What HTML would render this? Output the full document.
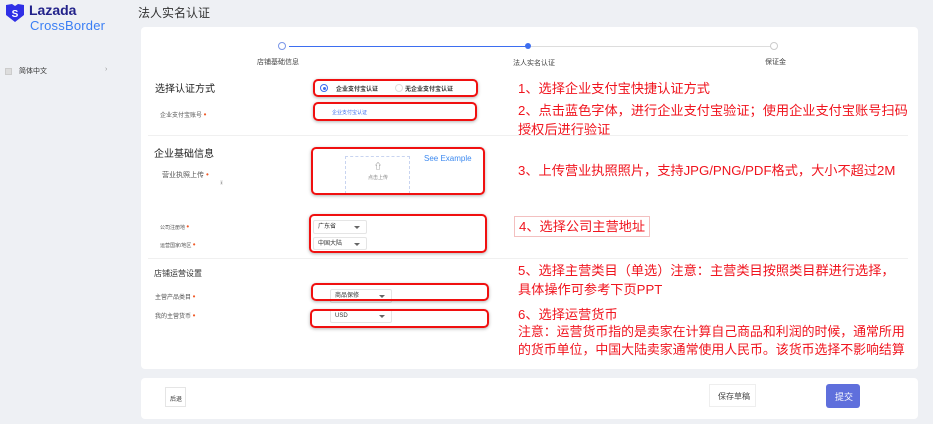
<!DOCTYPE html><html><head><meta charset="utf-8"><style>
*{margin:0;padding:0;box-sizing:border-box}
body{width:933px;height:424px;background:#eef0f4;font-family:"Liberation Sans","Noto Sans CJK SC",sans-serif;position:relative;overflow:hidden;color:#333}
.a{position:absolute;white-space:nowrap}
.card{position:absolute;background:#fff;border-radius:4px}
.r{position:absolute;border:2.5px solid #f01010;border-radius:5px;box-shadow:0 1px 3px rgba(0,0,0,.3)}
.red{position:absolute;color:#f0141e;font-size:13.2px;white-space:nowrap;line-height:19px}
.lbl{font-size:6px;color:#555}
.st{color:#f05a28;font-size:8px}
.sel{position:absolute;border:1px solid #e5e5e5;background:#fff;font-size:6px;line-height:12px;padding:0 4px;border-radius:2px}
.sel:after{content:"";position:absolute;right:6px;top:5px;border:3px solid transparent;border-top:3px solid #666}
.h{font-size:10px;color:#222}
</style></head><body>
<svg class="a" style="left:4px;top:3px" width="22" height="20" viewBox="0 0 22 20"><path d="M2 2 L8 1 L11 3 L14 1 L20 2 L20 12 L11 19 L2 12Z" fill="#2f2fe6"/><text x="11" y="14" font-size="10" fill="#fff" text-anchor="middle" font-weight="bold" font-family="Liberation Sans">S</text></svg>
<div class="a" style="left:29px;top:2px;font-size:14px;font-weight:bold;color:#22228a">Lazada</div>
<div class="a" style="left:30px;top:18px;font-size:13px;color:#3a7ef5;letter-spacing:0.2px">CrossBorder</div>
<div class="a" style="left:5px;top:68px;width:7px;height:7px;background:#ddd;border:1px solid #ccc"></div>
<div class="a" style="left:19px;top:66px;font-size:7px;color:#333">简体中文</div>
<div class="a" style="left:105px;top:66px;font-size:7px;color:#999">›</div>
<div class="a" style="left:138px;top:4px;font-size:12px;color:#333">法人实名认证</div>
<div class="card" style="left:141px;top:27px;width:777px;height:342px"></div>
<div class="card" style="left:141px;top:378px;width:777px;height:41px"></div>
<div class="a" style="left:289px;top:46px;width:238px;height:1px;background:#3d6ef0"></div>
<div class="a" style="left:531px;top:46px;width:240px;height:1px;background:#ddd"></div>
<div class="a" style="left:278px;top:42px;width:8px;height:8px;border:1px solid #7a96e8;border-radius:50%;background:#fff"></div>
<div class="a" style="left:525px;top:43px;width:6px;height:6px;border-radius:50%;background:#3d6ef0"></div>
<div class="a" style="left:770px;top:42px;width:8px;height:8px;border:1px solid #ccc;border-radius:50%;background:#fff"></div>
<div class="a" style="left:257px;top:57px;font-size:7px;color:#444">店铺基础信息</div>
<div class="a" style="left:513px;top:58px;font-size:7px;color:#444">法人实名认证</div>
<div class="a" style="left:765px;top:57px;font-size:7px;color:#444">保证金</div>
<div class="a h" style="left:155px;top:80px">选择认证方式</div>
<div class="a lbl" style="left:160px;top:110px">企业支付宝账号 <span class="st">•</span></div>
<div class="a" style="left:320px;top:84px;width:8px;height:8px;border:1px solid #3d6ef0;border-radius:50%"></div>
<div class="a" style="left:322.5px;top:86.5px;width:3px;height:3px;background:#3d6ef0;border-radius:50%"></div>
<div class="a" style="left:336px;top:84px;font-size:6px;font-weight:bold">企业支付宝认证</div>
<div class="a" style="left:395px;top:84px;width:8px;height:8px;border:1px solid #ddd;border-radius:50%"></div>
<div class="a" style="left:405px;top:84px;font-size:6px;font-weight:bold">无企业支付宝认证</div>
<div class="a" style="left:332px;top:109px;font-size:5px;color:#3d6ef0">企业支付宝认证</div>
<div class="a" style="left:148px;top:135px;width:760px;height:1px;background:#f0f0f0"></div>
<div class="a h" style="left:154px;top:145px">企业基础信息</div>
<div class="a lbl" style="left:162px;top:170px;font-size:7px">营业执照上传 <span class="st">•</span></div>
<div class="a" style="left:220px;top:180px;font-size:4px;background:#eee;padding:0 1px">i</div>
<div class="a" style="left:345px;top:156px;width:65px;height:38px;border:1px dashed #c8d4f0"></div>
<div class="a" style="left:374px;top:161px;font-size:8px;color:#666">⇧</div>
<div class="a" style="left:368px;top:174px;font-size:5px;color:#888">点击上传</div>
<div class="a" style="left:424px;top:154px;font-size:8px;color:#3d8af0">See Example</div>
<div class="a lbl" style="left:160px;top:222px;font-size:5px">公司注册地 <span class="st">•</span></div>
<div class="a lbl" style="left:160px;top:240px;font-size:5px">运营国家/地区 <span class="st">•</span></div>
<div class="sel" style="left:313px;top:220px;width:54px;height:14px">广东省</div>
<div class="sel" style="left:313px;top:237px;width:54px;height:13px">中国大陆</div>
<div class="a" style="left:148px;top:258px;width:760px;height:1px;background:#f0f0f0"></div>
<div class="a" style="left:154px;top:268px;font-size:8px">店铺运营设置</div>
<div class="a lbl" style="left:155px;top:292px">主营产品类目 <span class="st">•</span></div>
<div class="a lbl" style="left:155px;top:311px">我的主营货币 <span class="st">•</span></div>
<div class="sel" style="left:330px;top:289px;width:62px;height:14px">商品保修</div>
<div class="sel" style="left:330px;top:309px;width:62px;height:14px">USD</div>
<div class="r" style="left:313px;top:79px;width:165px;height:18px"></div>
<div class="r" style="left:313px;top:102px;width:164px;height:19px"></div>
<div class="r" style="left:311px;top:147px;width:174px;height:48px"></div>
<div class="r" style="left:309px;top:214px;width:178px;height:39px"></div>
<div class="r" style="left:311px;top:283px;width:178px;height:18px"></div>
<div class="r" style="left:310px;top:309px;width:179px;height:19px"></div>
<div class="red" style="left:518px;top:79px">1、选择企业支付宝快捷认证方式</div>
<div class="red" style="left:518px;top:101px">2、点击蓝色字体，进行企业支付宝验证；使用企业支付宝账号扫码<br>授权后进行验证</div>
<div class="red" style="left:518px;top:161px">3、上传营业执照照片，支持JPG/PNG/PDF格式，大小不超过2M</div>
<div class="red" style="left:514px;top:216px;border:1px solid #f3c0c0;padding:0 4px;height:21px">4、选择公司主营地址</div>
<div class="red" style="left:518px;top:261px">5、选择主营类目（单选）注意：主营类目按照类目群进行选择，<br>具体操作可参考下页PPT</div>
<div class="red" style="left:518px;top:305px">6、选择运营货币</div>
<div class="red" style="left:518px;top:323px;line-height:18px;font-size:12.9px">注意：运营货币指的是卖家在计算自己商品和利润的时候，通常所用<br>的货币单位，中国大陆卖家通常使用人民币。该货币选择不影响结算</div>
<div class="a" style="left:165px;top:387px;width:21px;height:20px;border:1px solid #e5e5e5;font-size:6px;padding:6px 0 0 4px">后退</div>
<div class="a" style="left:709px;top:384px;width:47px;height:23px;border:1px solid #eee;font-size:8px;padding:6px 0 0 8px;color:#444">保存草稿</div>
<div class="a" style="left:826px;top:384px;width:34px;height:24px;background:#5f6fdc;border-radius:3px;color:#fff;font-size:9px;padding:6px 0 0 9px">提交</div>
</body></html>
